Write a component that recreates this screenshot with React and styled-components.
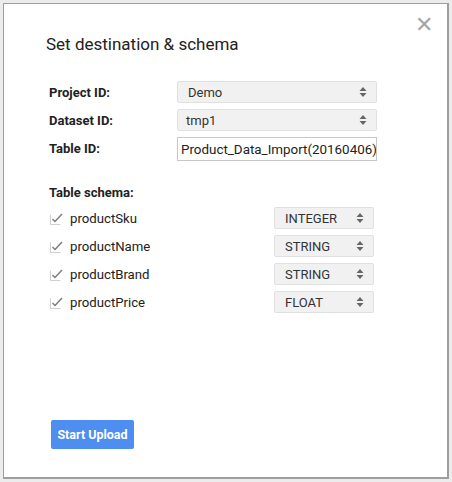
import React from 'react';
import styled, { createGlobalStyle } from 'styled-components';

const GlobalStyle = createGlobalStyle`
  html, body {
    margin: 0;
    padding: 0;
    background: #ececec;
    font-family: Roboto, "Liberation Sans", Arial, sans-serif;
  }
`;

const Frame = styled.div`
  width: 452px;
  height: 482px;
  padding: 3px;
  box-sizing: border-box;
`;

const Dialog = styled.div`
  position: relative;
  height: 100%;
  box-sizing: border-box;
  background: #fff;
  border: 2px solid #9e9e9e;
  border-top-width: 1px;
  border-left-width: 1px;
  padding: 30px 0 0 42px;
  display: flex;
  flex-direction: column;
`;

const CloseButton = styled.div`
  position: absolute;
  top: 10px;
  right: 14px;
  font-size: 22px;
  line-height: 1;
  color: #a6a6a6;
  cursor: pointer;
`;

const Title = styled.h2`
  margin: 0;
  font-size: 17px;
  font-weight: 400;
  color: #222;
`;

const FieldGrid = styled.div`
  display: grid;
  grid-template-columns: 128px 200px;
  row-gap: 6px;
  margin-top: 27px;
  padding-left: 3px;
`;

const FieldLabel = styled.div`
  font-size: 13px;
  font-weight: 700;
  color: #222;
  display: flex;
  align-items: center;
  height: 22px;
`;

const Select = styled.div`
  box-sizing: border-box;
  width: ${p => p.width || '200px'};
  height: 22px;
  background: #f1f1f1;
  border: 1px solid #e0e0e0;
  border-radius: 2px;
  display: flex;
  align-items: center;
  justify-content: space-between;
  padding: 0 ${p => p.padRight || '9px'} 0 ${p => p.padLeft || '10px'};
  font-size: 13px;
  color: #333;
`;

const Input = styled.div`
  box-sizing: border-box;
  width: 200px;
  height: 24px;
  border: 1px solid #c8c8c8;
  display: flex;
  align-items: center;
  padding: 0 3px;
  font-size: 13.4px;
  color: #222;
  white-space: nowrap;
  overflow: hidden;
`;

const SchemaTitle = styled.div`
  margin-top: 24px;
  padding-left: 3px;
  font-size: 13px;
  font-weight: 700;
  color: #222;
`;

const SchemaList = styled.div`
  display: flex;
  flex-direction: column;
  gap: 6px;
  margin-top: 7px;
  padding-left: 4px;
  width: 324px;
`;

const SchemaRow = styled.div`
  display: flex;
  align-items: center;
  justify-content: space-between;
  height: 22px;
`;

const FieldName = styled.label`
  display: flex;
  align-items: center;
  gap: 7px;
  font-size: 13.2px;
  color: #222;
`;

const Box = styled.span`
  width: 13px;
  height: 13px;
  display: inline-flex;
`;

const Footer = styled.div`
  margin-top: auto;
  padding: 0 0 28px 5px;
`;

const PrimaryButton = styled.button`
  width: 83px;
  height: 29px;
  border: none;
  border-radius: 2px;
  background: #4d8ef0;
  color: #fff;
  font-family: inherit;
  font-size: 12.5px;
  font-weight: 700;
  cursor: pointer;
`;

const Arrows = () => (
  <svg width="8" height="12" viewBox="0 0 8 12">
    <path d="M0.5 5 L4 1 L7.5 5 Z" fill="#666" />
    <path d="M0.5 7 L4 11 L7.5 7 Z" fill="#666" />
  </svg>
);

const Check = () => (
  <Box>
    <svg width="13" height="13" viewBox="0 0 13 13">
      <path d="M0.5 2.5 V12.5 H10.5" fill="none" stroke="#d0d0d0" strokeWidth="1" />
      <path d="M2.5 7 L5 9.5 L12 2" fill="none" stroke="#7a7a7a" strokeWidth="1.4" />
    </svg>
  </Box>
);

const schema = [
  { name: 'productSku', type: 'INTEGER' },
  { name: 'productName', type: 'STRING' },
  { name: 'productBrand', type: 'STRING' },
  { name: 'productPrice', type: 'FLOAT' },
];

export default function App() {
  return (
    <>
      <GlobalStyle />
      <Frame>
        <Dialog>
          <CloseButton>✕</CloseButton>
          <Title>Set destination &amp; schema</Title>

          <FieldGrid>
            <FieldLabel>Project ID:</FieldLabel>
            <Select>Demo<Arrows /></Select>
            <FieldLabel>Dataset ID:</FieldLabel>
            <Select padLeft="8px">tmp1<Arrows /></Select>
            <FieldLabel>Table ID:</FieldLabel>
            <Input>Product_Data_Import(20160406)</Input>
          </FieldGrid>

          <SchemaTitle>Table schema:</SchemaTitle>
          <SchemaList>
            {schema.map(f => (
              <SchemaRow key={f.name}>
                <FieldName><Check />{f.name}</FieldName>
                <Select width="100px">{f.type}<Arrows /></Select>
              </SchemaRow>
            ))}
          </SchemaList>

          <Footer>
            <PrimaryButton>Start Upload</PrimaryButton>
          </Footer>
        </Dialog>
      </Frame>
    </>
  );
}
